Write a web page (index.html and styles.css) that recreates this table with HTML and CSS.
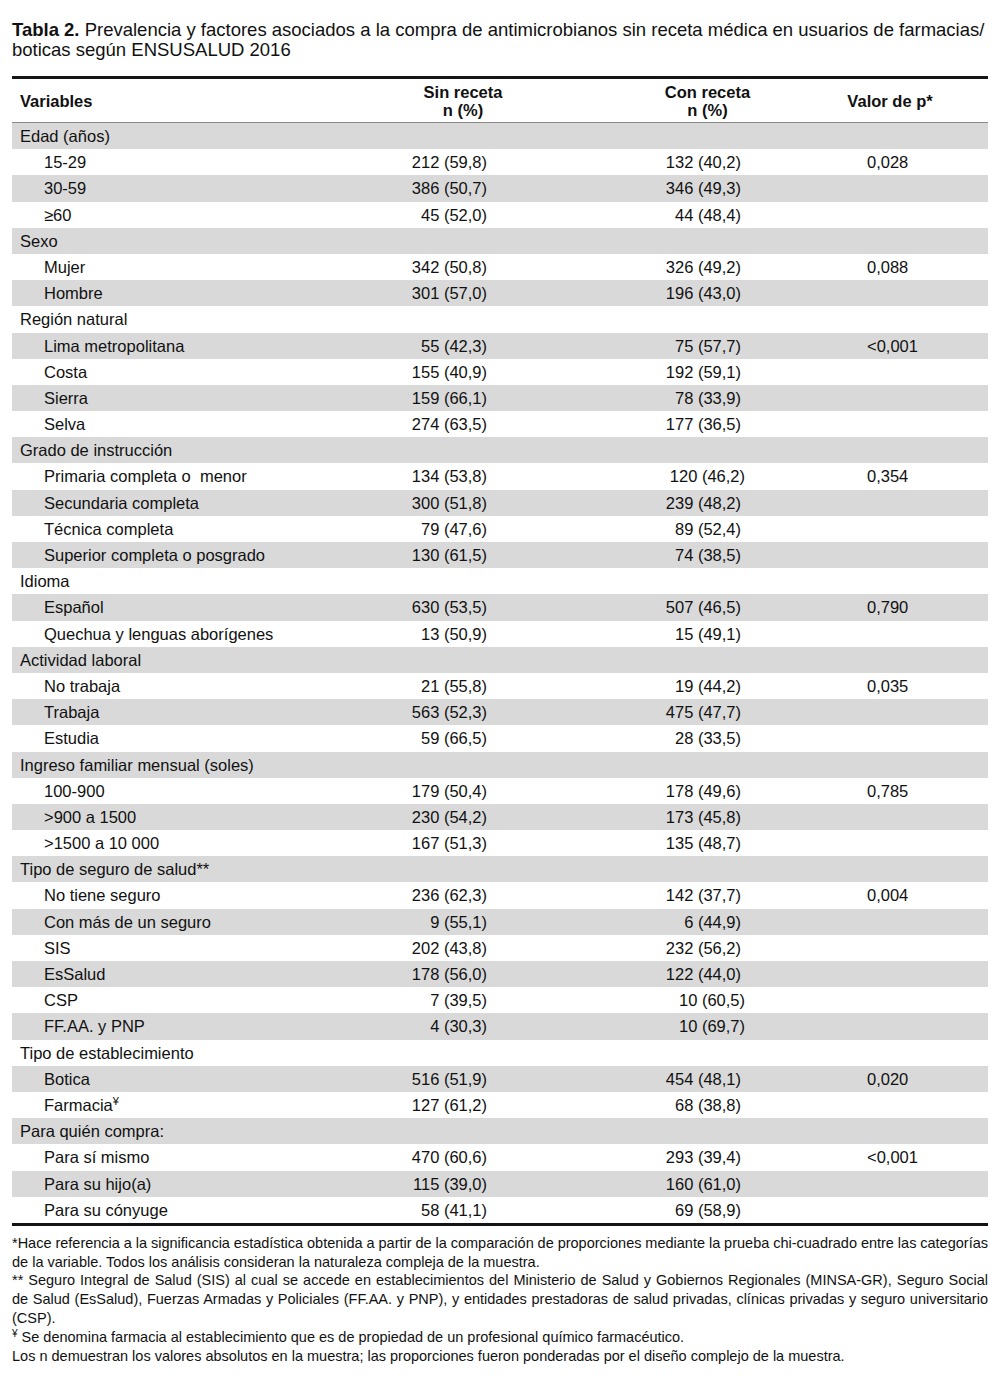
FILE: index.html
```html
<!DOCTYPE html>
<html lang="es">
<head>
<meta charset="utf-8">
<title>Tabla 2</title>
<link rel="stylesheet" href="styles.css">
</head>
<body>
<div class="page">
  <p class="title"><b>Tabla 2.</b> Prevalencia y factores asociados a la compra de antimicrobianos sin receta médica en usuarios de farmacias/<br>boticas según ENSUSALUD 2016</p>

  <div class="table">
    <div class="thead">
      <div class="th th-var">Variables</div>
      <div class="th th-sin">Sin receta<br>n (%)</div>
      <div class="th th-con">Con receta<br>n (%)</div>
      <div class="th th-p">Valor de p*</div>
    </div>
    <div class="tbody">
      <div class="row cat"><div class="c-lab">Edad (años)</div><div class="c-sin"></div><div class="c-con"></div><div class="c-p"></div></div>
      <div class="row"><div class="c-lab">15-29</div><div class="c-sin">212 (59,8)</div><div class="c-con">132 (40,2)</div><div class="c-p">0,028</div></div>
      <div class="row"><div class="c-lab">30-59</div><div class="c-sin">386 (50,7)</div><div class="c-con">346 (49,3)</div><div class="c-p"></div></div>
      <div class="row"><div class="c-lab">≥60</div><div class="c-sin">45 (52,0)</div><div class="c-con">44 (48,4)</div><div class="c-p"></div></div>

      <div class="row cat"><div class="c-lab">Sexo</div><div class="c-sin"></div><div class="c-con"></div><div class="c-p"></div></div>
      <div class="row"><div class="c-lab">Mujer</div><div class="c-sin">342 (50,8)</div><div class="c-con">326 (49,2)</div><div class="c-p">0,088</div></div>
      <div class="row"><div class="c-lab">Hombre</div><div class="c-sin">301 (57,0)</div><div class="c-con">196 (43,0)</div><div class="c-p"></div></div>

      <div class="row cat"><div class="c-lab">Región natural</div><div class="c-sin"></div><div class="c-con"></div><div class="c-p"></div></div>
      <div class="row"><div class="c-lab">Lima metropolitana</div><div class="c-sin">55 (42,3)</div><div class="c-con">75 (57,7)</div><div class="c-p">&lt;0,001</div></div>
      <div class="row"><div class="c-lab">Costa</div><div class="c-sin">155 (40,9)</div><div class="c-con">192 (59,1)</div><div class="c-p"></div></div>
      <div class="row"><div class="c-lab">Sierra</div><div class="c-sin">159 (66,1)</div><div class="c-con">78 (33,9)</div><div class="c-p"></div></div>
      <div class="row"><div class="c-lab">Selva</div><div class="c-sin">274 (63,5)</div><div class="c-con">177 (36,5)</div><div class="c-p"></div></div>

      <div class="row cat"><div class="c-lab">Grado de instrucción</div><div class="c-sin"></div><div class="c-con"></div><div class="c-p"></div></div>
      <div class="row"><div class="c-lab">Primaria completa o&nbsp; menor</div><div class="c-sin">134 (53,8)</div><div class="c-con shifted">120 (46,2)</div><div class="c-p">0,354</div></div>
      <div class="row"><div class="c-lab">Secundaria completa</div><div class="c-sin">300 (51,8)</div><div class="c-con">239 (48,2)</div><div class="c-p"></div></div>
      <div class="row"><div class="c-lab">Técnica completa</div><div class="c-sin">79 (47,6)</div><div class="c-con">89 (52,4)</div><div class="c-p"></div></div>
      <div class="row"><div class="c-lab">Superior completa o posgrado</div><div class="c-sin">130 (61,5)</div><div class="c-con">74 (38,5)</div><div class="c-p"></div></div>

      <div class="row cat"><div class="c-lab">Idioma</div><div class="c-sin"></div><div class="c-con"></div><div class="c-p"></div></div>
      <div class="row"><div class="c-lab">Español</div><div class="c-sin">630 (53,5)</div><div class="c-con">507 (46,5)</div><div class="c-p">0,790</div></div>
      <div class="row"><div class="c-lab">Quechua y lenguas aborígenes</div><div class="c-sin">13 (50,9)</div><div class="c-con">15 (49,1)</div><div class="c-p"></div></div>

      <div class="row cat"><div class="c-lab">Actividad laboral</div><div class="c-sin"></div><div class="c-con"></div><div class="c-p"></div></div>
      <div class="row"><div class="c-lab">No trabaja</div><div class="c-sin">21 (55,8)</div><div class="c-con">19 (44,2)</div><div class="c-p">0,035</div></div>
      <div class="row"><div class="c-lab">Trabaja</div><div class="c-sin">563 (52,3)</div><div class="c-con">475 (47,7)</div><div class="c-p"></div></div>
      <div class="row"><div class="c-lab">Estudia</div><div class="c-sin">59 (66,5)</div><div class="c-con">28 (33,5)</div><div class="c-p"></div></div>

      <div class="row cat"><div class="c-lab">Ingreso familiar mensual (soles)</div><div class="c-sin"></div><div class="c-con"></div><div class="c-p"></div></div>
      <div class="row"><div class="c-lab">100-900</div><div class="c-sin">179 (50,4)</div><div class="c-con">178 (49,6)</div><div class="c-p">0,785</div></div>
      <div class="row"><div class="c-lab">&gt;900 a 1500</div><div class="c-sin">230 (54,2)</div><div class="c-con">173 (45,8)</div><div class="c-p"></div></div>
      <div class="row"><div class="c-lab">&gt;1500 a 10 000</div><div class="c-sin">167 (51,3)</div><div class="c-con">135 (48,7)</div><div class="c-p"></div></div>

      <div class="row cat"><div class="c-lab">Tipo de seguro de salud**</div><div class="c-sin"></div><div class="c-con"></div><div class="c-p"></div></div>
      <div class="row"><div class="c-lab">No tiene seguro</div><div class="c-sin">236 (62,3)</div><div class="c-con">142 (37,7)</div><div class="c-p">0,004</div></div>
      <div class="row"><div class="c-lab">Con más de un seguro</div><div class="c-sin">9 (55,1)</div><div class="c-con">6 (44,9)</div><div class="c-p"></div></div>
      <div class="row"><div class="c-lab">SIS</div><div class="c-sin">202 (43,8)</div><div class="c-con">232 (56,2)</div><div class="c-p"></div></div>
      <div class="row"><div class="c-lab">EsSalud</div><div class="c-sin">178 (56,0)</div><div class="c-con">122 (44,0)</div><div class="c-p"></div></div>
      <div class="row"><div class="c-lab">CSP</div><div class="c-sin">7 (39,5)</div><div class="c-con shifted">10 (60,5)</div><div class="c-p"></div></div>
      <div class="row"><div class="c-lab">FF.AA. y PNP</div><div class="c-sin">4 (30,3)</div><div class="c-con shifted">10 (69,7)</div><div class="c-p"></div></div>

      <div class="row cat"><div class="c-lab">Tipo de establecimiento</div><div class="c-sin"></div><div class="c-con"></div><div class="c-p"></div></div>
      <div class="row"><div class="c-lab">Botica</div><div class="c-sin">516 (51,9)</div><div class="c-con">454 (48,1)</div><div class="c-p">0,020</div></div>
      <div class="row"><div class="c-lab">Farmacia<sup class="yen">¥</sup></div><div class="c-sin">127 (61,2)</div><div class="c-con">68 (38,8)</div><div class="c-p"></div></div>

      <div class="row cat"><div class="c-lab">Para quién compra:</div><div class="c-sin"></div><div class="c-con"></div><div class="c-p"></div></div>
      <div class="row"><div class="c-lab">Para sí mismo</div><div class="c-sin">470 (60,6)</div><div class="c-con">293 (39,4)</div><div class="c-p">&lt;0,001</div></div>
      <div class="row"><div class="c-lab">Para su hijo(a)</div><div class="c-sin">115 (39,0)</div><div class="c-con">160 (61,0)</div><div class="c-p"></div></div>
      <div class="row"><div class="c-lab">Para su cónyuge</div><div class="c-sin">58 (41,1)</div><div class="c-con">69 (58,9)</div><div class="c-p"></div></div>
    </div>
  </div>

  <div class="notes">
    <p><span class="ln">*Hace referencia a la significancia estadística obtenida a partir de la comparación de proporciones mediante la prueba chi-cuadrado entre las categorías</span> de la variable. Todos los análisis consideran la naturaleza compleja de la muestra.</p>
    <p><span class="ln">** Seguro Integral de Salud (SIS) al cual se accede en establecimientos del Ministerio de Salud y Gobiernos Regionales (MINSA-GR), Seguro Social</span><span class="ln">de Salud (EsSalud), Fuerzas Armadas y Policiales (FF.AA. y PNP), y entidades prestadoras de salud privadas, clínicas privadas y seguro universitario</span>(CSP).</p>
    <p><sup class="yen-note">¥</sup> Se denomina farmacia al establecimiento que es de propiedad de un profesional químico farmacéutico.</p>
    <p>Los n demuestran los valores absolutos en la muestra; las proporciones fueron ponderadas por el diseño complejo de la muestra.</p>
  </div>
</div>
</body>
</html>
```

FILE: styles.css
```css
html, body {
  margin: 0;
  padding: 0;
  background: #ffffff;
}

body {
  font-family: "Liberation Sans", Arial, sans-serif;
  color: #111111;
}

.page {
  padding: 20px 12px 0 12px;
}

.title {
  margin: 0;
  font-size: 18.5px;
  line-height: 20px;
  white-space: nowrap;
  color: #111111;
}

.title b {
  font-weight: bold;
}

.table {
  margin-top: 16px;
  border-top: 3px solid #151515;
  border-bottom: 3px solid #151515;
}

.thead {
  display: grid;
  grid-template-columns: 323px 270px 193px 1fr;
  height: 43px;
  border-bottom: 1px solid #8a8a8a;
  font-size: 16.5px;
  font-weight: bold;
}

.th {
  white-space: nowrap;
}

.th-var {
  padding: 12px 0 0 8px;
  line-height: 21px;
}

.th-sin {
  padding: 4px 14px 0 0;
  line-height: 18px;
  text-align: center;
}

.th-con {
  padding: 4px 0 0 12px;
  line-height: 18px;
  text-align: center;
}

.th-p {
  padding: 12px 6px 0 0;
  line-height: 21px;
  text-align: center;
}

.row {
  display: grid;
  grid-template-columns: 323px 152px 254px 1fr;
  height: 26.2px;
  font-size: 16.5px;
  line-height: 26.2px;
  white-space: nowrap;
}

.tbody .row:nth-child(odd) {
  background: #d9d9d9;
}

.row:first-child {
  line-height: 27px;
}

.c-lab {
  padding-left: 32px;
}

.row.cat .c-lab {
  padding-left: 8px;
}

.c-sin,
.c-con {
  text-align: right;
}

.c-con.shifted {
  margin-right: -4px;
}

.c-p {
  padding-left: 126px;
}

.yen {
  font-size: 11px;
  line-height: 0;
  vertical-align: 6px;
}

.notes {
  margin-top: 8px;
  font-size: 14.5px;
  line-height: 18.8px;
  text-align: justify;
  color: #111111;
}

.notes p {
  margin: 0;
}

.notes .ln {
  display: block;
  text-align: justify;
  text-align-last: justify;
  word-spacing: -1px;
}

.yen-note {
  font-size: 10px;
  line-height: 0;
  vertical-align: 5px;
}
```
